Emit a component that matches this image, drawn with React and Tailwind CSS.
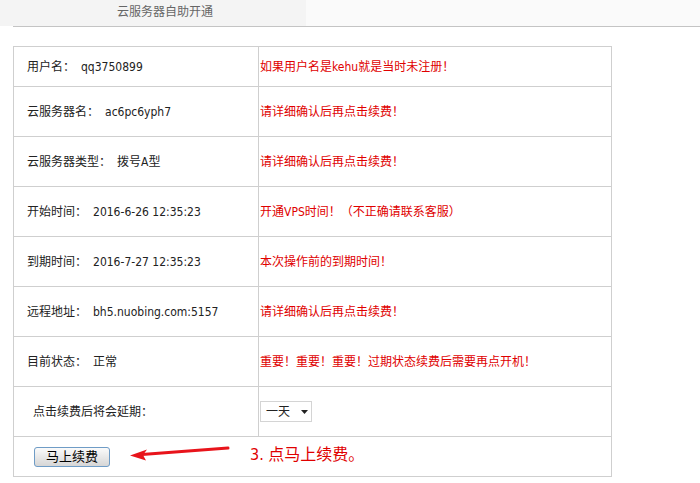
import React from 'react';

const rows = [
  { label: '用户名：', value: 'qq3750899', note: '如果用户名是kehu就是当时未注册！', h: 'h-[40px]' },
  { label: '云服务器名：', value: 'ac6pc6yph7', note: '请详细确认后再点击续费！' },
  { label: '云服务器类型：', value: '拨号A型', note: '请详细确认后再点击续费！' },
  { label: '开始时间：', value: '2016-6-26 12:35:23', note: '开通VPS时间！（不正确请联系客服）' },
  { label: '到期时间：', value: '2016-7-27 12:35:23', note: '本次操作前的到期时间！' },
  { label: '远程地址：', value: 'bh5.nuobing.com:5157', note: '请详细确认后再点击续费！' },
  { label: '目前状态：', value: '正常', note: '重要！重要！重要！过期状态续费后需要再点开机！' },
];

function App() {
  return (
    <div
      className="w-[700px] h-[483px] bg-white text-[12px] text-[#222]"
      style={{ fontFamily: '"DejaVu Sans Condensed", "Noto Sans CJK SC", sans-serif' }}
    >
      {/* top tab */}
      <div className="flex h-[26px]">
        <div className="w-[306px] bg-[#f4f4f4] pl-[117px] pt-[3px] text-[#666]">云服务器自助开通</div>
        <div className="flex-1 bg-[#fafafa]"></div>
      </div>
      <div className="ml-[13px] h-px bg-[#c4c4c4]"></div>

      <table className="ml-[13px] mt-[19px] w-[599px] border-collapse">
        <tbody>
          {rows.map((r, i) => (
            <tr key={i}>
              <td className={`w-[245px] border border-[#cfcfcf] pl-[13px] ${r.h || 'h-[50px]'}`}>
                {r.label}
                <span className="ml-[6px]">{r.value}</span>
              </td>
              <td className="border border-[#cfcfcf] pl-px text-[#e00000]">{r.note}</td>
            </tr>
          ))}
          <tr>
            <td className="h-[50px] border border-[#cfcfcf] pl-[19px]">点击续费后将会延期：</td>
            <td className="border border-[#cfcfcf] pl-px">
              <div className="flex h-[21px] w-[52px] items-center border border-[#d4d4d4] bg-white pl-[5px]">
                <span>一天</span>
                <svg className="ml-[11px]" width="7" height="4" viewBox="0 0 7 4">
                  <polygon points="0,0 7,0 3.5,4" fill="#222" />
                </svg>
              </div>
            </td>
          </tr>
          <tr>
            <td colSpan={2} className="h-[40px] border border-[#cfcfcf] pl-[20px]">
              <div className="flex items-center">
                <button className="h-[20px] w-[76px] rounded-[3px] border border-[#6f9cc6] bg-gradient-to-b from-[#fbfbfb] to-[#d6d6d6] text-[13px] leading-none text-black">
                  马上续费
                </button>
                <svg className="ml-[20px] -mt-[6px]" width="100" height="16" viewBox="0 0 100 16">
                  <line x1="12" y1="8.5" x2="98" y2="2" stroke="#e8141b" strokeWidth="3" strokeLinecap="round" />
                  <polygon points="0,9.5 17,3.5 13,9 16,14.5" fill="#e8141b" />
                </svg>
                <span className="ml-[20px] -mt-[4px] text-[16px] text-[#e00000]">3. 点马上续费。</span>
              </div>
            </td>
          </tr>
        </tbody>
      </table>
    </div>
  );
}

export default App;
